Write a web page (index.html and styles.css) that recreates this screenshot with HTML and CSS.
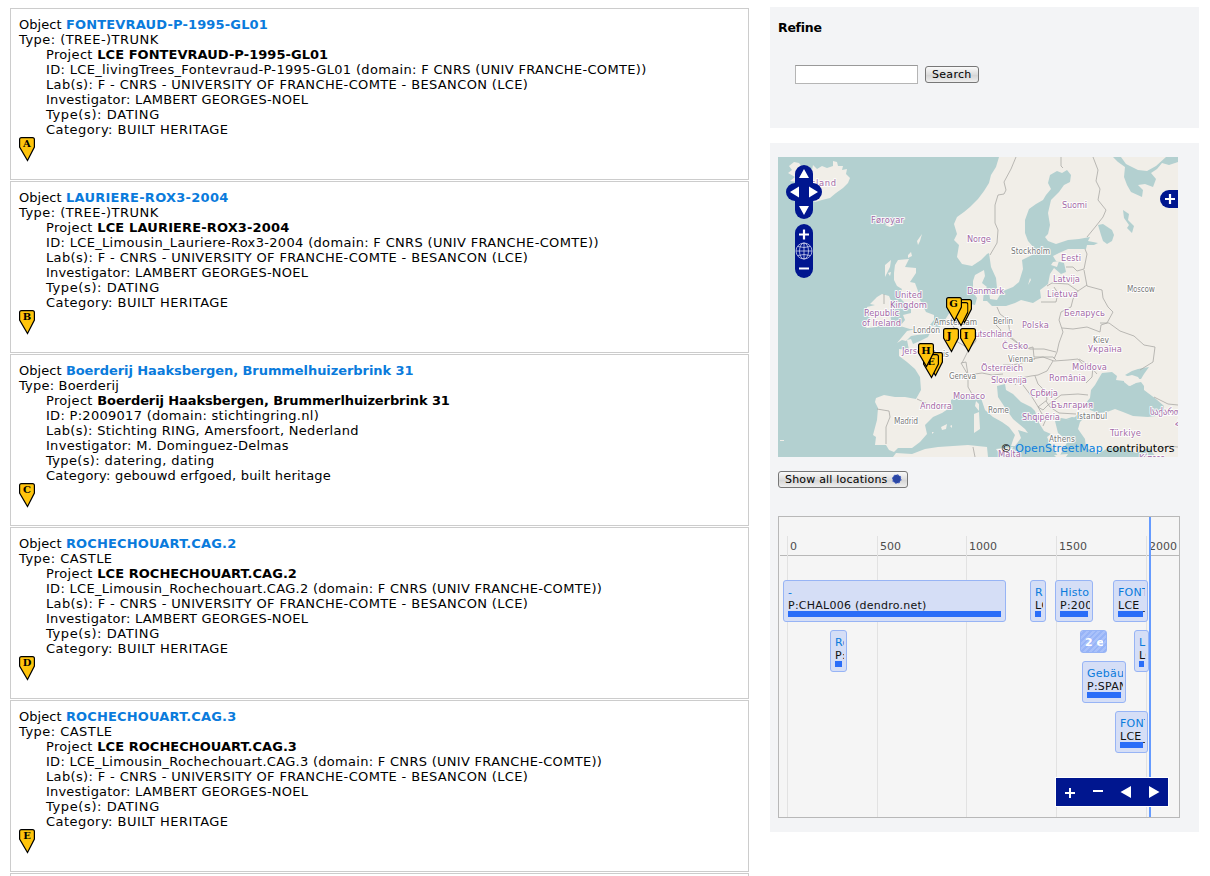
FILE: index.html
```html
<!DOCTYPE html>
<html lang="en">
<head>
<meta charset="utf-8">
<title>Search results</title>
<link rel="stylesheet" href="styles.css">
</head>
<body>
<svg class="defs" width="0" height="0">
  <symbol id="pin" viewBox="0 0 16 25">
    <path d="M2.5 .6H13.5Q15.4.6 15.4 2.5V10L8.5 23.6 .6 10V2.5Q.6.6 2.5.6Z" fill="#ffc40c" stroke="#000" stroke-width="1.2"/>
  </symbol>
</svg>
<div class="page">
  <main class="results">
    <article class="card">
      <div class="title">Object <a>FONTEVRAUD-P-1995-GL01</a></div>
      <div class="wide">Type: (TREE-)TRUNK</div>
      <div class="project">
        <div>Project <b>LCE FONTEVRAUD-P-1995-GL01</b></div>
        <div>ID: LCE_livingTrees_Fontevraud-P-1995-GL01 (domain: F CNRS (UNIV FRANCHE-COMTE))</div>
        <div class="lab">Lab(s): F - CNRS - UNIVERSITY OF FRANCHE-COMTE - BESANCON (LCE)</div>
        <div class="snug">Investigator: LAMBERT GEORGES-NOEL</div>
        <div class="wider">Type(s): DATING</div>
        <div class="wide">Category: BUILT HERITAGE</div>
      </div>
      <svg class="pin" viewBox="0 0 16 25"><use href="#pin"/><text x="8" y="10">A</text></svg>
    </article>
    <article class="card">
      <div class="title spaced">Object <a>LAURIERE-ROX3-2004</a></div>
      <div class="wide">Type: (TREE-)TRUNK</div>
      <div class="project">
        <div class="spaced">Project <b>LCE LAURIERE-ROX3-2004</b></div>
        <div>ID: LCE_Limousin_Lauriere-Rox3-2004 (domain: F CNRS (UNIV FRANCHE-COMTE))</div>
        <div class="lab">Lab(s): F - CNRS - UNIVERSITY OF FRANCHE-COMTE - BESANCON (LCE)</div>
        <div class="snug">Investigator: LAMBERT GEORGES-NOEL</div>
        <div class="wider">Type(s): DATING</div>
        <div class="wide">Category: BUILT HERITAGE</div>
      </div>
      <svg class="pin" viewBox="0 0 16 25"><use href="#pin"/><text x="8" y="10">B</text></svg>
    </article>
    <article class="card">
      <div class="title tight">Object <a>Boerderij Haaksbergen, Brummelhuizerbrink 31</a></div>
      <div class="snug">Type: Boerderij</div>
      <div class="project">
        <div class="tight">Project <b>Boerderij Haaksbergen, Brummerlhuizerbrink 31</b></div>
        <div class="medium">ID: P:2009017 (domain: stichtingring.nl)</div>
        <div class="medium">Lab(s): Stichting RING, Amersfoort, Nederland</div>
        <div class="medium">Investigator: M. Dominguez-Delmas</div>
        <div class="lab">Type(s): datering, dating</div>
        <div class="snug">Category: gebouwd erfgoed, built heritage</div>
      </div>
      <svg class="pin" viewBox="0 0 16 25"><use href="#pin"/><text x="8" y="10">C</text></svg>
    </article>
    <article class="card">
      <div class="title">Object <a>ROCHECHOUART.CAG.2</a></div>
      <div class="wide">Type: CASTLE</div>
      <div class="project">
        <div>Project <b>LCE ROCHECHOUART.CAG.2</b></div>
        <div class="medium">ID: LCE_Limousin_Rochechouart.CAG.2 (domain: F CNRS (UNIV FRANCHE-COMTE))</div>
        <div class="lab">Lab(s): F - CNRS - UNIVERSITY OF FRANCHE-COMTE - BESANCON (LCE)</div>
        <div class="snug">Investigator: LAMBERT GEORGES-NOEL</div>
        <div class="wider">Type(s): DATING</div>
        <div class="wide">Category: BUILT HERITAGE</div>
      </div>
      <svg class="pin" viewBox="0 0 16 25"><use href="#pin"/><text x="8" y="10">D</text></svg>
    </article>
    <article class="card">
      <div class="title">Object <a>ROCHECHOUART.CAG.3</a></div>
      <div class="wide">Type: CASTLE</div>
      <div class="project">
        <div>Project <b>LCE ROCHECHOUART.CAG.3</b></div>
        <div class="medium">ID: LCE_Limousin_Rochechouart.CAG.3 (domain: F CNRS (UNIV FRANCHE-COMTE))</div>
        <div class="lab">Lab(s): F - CNRS - UNIVERSITY OF FRANCHE-COMTE - BESANCON (LCE)</div>
        <div class="snug">Investigator: LAMBERT GEORGES-NOEL</div>
        <div class="wider">Type(s): DATING</div>
        <div class="wide">Category: BUILT HERITAGE</div>
      </div>
      <svg class="pin" viewBox="0 0 16 25"><use href="#pin"/><text x="8" y="10">E</text></svg>
    </article>
    <article class="card next"></article>
  </main>

  <aside class="side">
    <section class="panel refine">
      <h2>Refine</h2>
      <form class="search"><input type="text" class="field"><button type="button" class="btn">Search</button></form>
    </section>

    <section class="panel explore">
      <svg class="map" viewBox="0 0 400 300" width="400" height="300">
        <rect width="400" height="300" fill="#b3d0d0"/>
        <g fill="#f1eee8">
          <path d="M10 16L14 13 11 9 16 5 21 6 24 10 30 9 34 13 35 8 39 12 44 9 49 11 55 9 55 4 59 5 60 9 65 9 64 13 69 12 68 17 72 21 70 26 65 31 58 36 52 41 44 43 37 45 30 41 22 40 24 30 17 31 20 25 12 24 17 20Z"/>
          <path d="M107 68L112 65 117 68 112 70ZM139 84L144 77 142 84 140 88ZM130 98L133 95 134 99 130 101ZM107 108L113 103 112 110 107 120ZM110 116L113 115 112 119Z"/>
          <path d="M120 103L131 102 127 110 138 111 138 116 132 125 137 126 140 134 142 143 146 151 148 155 156 158 156 163 152 168 159 170 157 175 149 177 139 178 133 179 128 184 124 183 119 186 124 180 129 174 138 172 132 172 122 169 127 163 125 158 133 156 133 149 128 147 121 140 124 132 119 129 116 123 116 116 117 108Z"/>
          <path d="M104 137L111 139 114 146 112 154 113 163 107 167 98 170 89 171 85 168 92 161 89 157 89 150 97 148 92 147 99 140Z"/>
          <path d="M400 0H221L218 10 213 18 211 26 206 34 200 42 192 50 186 55 179 60 176 67 179 77 176 83 181 88 179 100 184 107 194 109 203 103 209 97 211 96 213 110 218 121 219 131 225 134 235 130 241 125 245 112 244 103 254 98 257 92 250 84 247 76 247 63 251 52 258 47 265 43 268 38 273 32 270 26 272 18 279 14 284 16 289 13 293 18 292 25 286 28 281 35 273 43 270 56 272 68 270 77 267 80 270 84 278 87 290 83 301 82 312 80 310 84 320 86 316 88 309 88 308 92 298 92 290 92 281 96 275 99 278 104 286 106 288 115 283 117 276 111 272 117 270 127 262 133 263 141 255 146 243 143 237 146 228 149 214 149 209 144 205 144 206 133 209 130 204 126 207 119 206 113 197 118 195 124 195 135 199 141 197 148 184 145 177 149 172 155 165 166 159 173 152 176 150 180 142 184 135 187 133 182 129 183 131 193 121 192 121 199 129 205 137 212 142 220 143 233 138 242 127 240 117 240 106 238 98 241 97 245 100 251 99 263 95 278 98 280 97 288 108 288 111 293 116 295 120 291 134 291 142 285 149 277 147 268 155 260 164 256 173 250 173 243 182 239 190 240 197 239 203 241 207 253 215 260 224 265 231 270 237 278 235 283 233 289 237 289 243 281 240 273 250 276 247 272 235 262 228 252 220 240 219 229 227 227 228 233 235 237 243 245 253 250 257 254 261 266 266 274 273 277 269 280 275 292 281 300 286 291 290 284 280 276 277 264 283 261 294 263 299 258 310 257 302 265 300 272 307 282 308 291 320 297 330 291 344 290 358 296 371 291 378 300H400Z"/>
          <path d="M211 135L220 131 223 136 219 143 212 142Z"/>
          <path d="M115 300L118 296 134 297 147 292 160 290 175 289 190 288 209 290 210 300Z"/>
          <path d="M218 292L235 290 232 299 221 296ZM198 244L201 247 201 254 197 249ZM196 257L201 255 202 272 196 276ZM163 270L169 267 168 272 164 273ZM172 269L174 268 174 271ZM154 275L156 275 154 277ZM2 283H6V284H2ZM276 298L290 297 288 300H278ZM245 90L249 92 247 97ZM252 121L250 128 253 123ZM275 105L281 104 279 110 273 108Z"/>
        </g>
        <g fill="#b3d0d0">
          <path d="M335 0L340 5 347 10 346 20 349 28 353 35 364 40 365 33 360 28 367 27 375 30 378 22 373 16 379 12 384 6 391 8 400 5V0H388L378 9 369 14 360 13 348 7 343 0Z"/>
          <path d="M320 68L325 67 334 73 336 78 334 84 329 87 325 84 323 78Z"/>
          <path d="M345 53L351 57 350 63 356 69 354 76 349 71 351 68 346 61Z"/>
          <path d="M321 221L324 216 334 215 339 219 338 223 346 224 352 229 358 226 363 225 366 229 366 233 378 242 386 249 386 255 378 259 370 260 355 259 345 255 337 252 329 255 320 256 312 253 308 246 312 241 313 233 317 228Z"/>
          <path d="M347 218L354 214 360 212 371 210 366 217 363 222 356 222Z"/>
          <path d="M288 262L294 260 301 261 296 264Z"/>
        </g>
        <path d="M346 225L346 220 354 218 360 220 362 223 357 226 351 229Z" fill="#f1eee8"/>
        <g fill="none" stroke="#aaa8a5" stroke-width=".8">
          <path d="M238 0L233 12 226 25 228 33 226 37 220 38 217 48 217 66 220 73 219 86 212 98M283 0V9L285 11M315 0L320 13 318 24 322 32 320 43 328 53 325 60 318 69 309 80M307 92L309 97 306 112 299 114 295 110 288 110M306 113L309 129 324 133 325 141 330 150M269 129L274 126 290 127 300 134 309 128M276 130L280 136 278 145 263 145M300 134L295 142 293 150 283 155 281 163 285 175 281 186 279 195 276 202M284 171L295 172 309 170 322 175 323 168 329 166 335 155 330 150M322 166L331 166 342 174 356 179 366 188 377 190 375 205 362 213M218 168L223 173 219 179 231 180 242 188 252 192 266 192 278 195M219 150L222 157 230 163 232 177M233 180L247 192 255 190 256 200 275 200 278 203M225 208L235 208 248 205 257 202M254 202L265 200 276 204 290 203 300 202 308 211 315 210 314 220 308 226M275 204L269 214 260 218 253 219 243 221 237 228M257 219L260 227 268 235 269 243 260 250 265 253 270 248 283 238 300 237 310 238M268 244L272 250 281 256 298 257M245 228L254 240 259 248 264 257 269 260 265 269M301 202L311 208 319 217M225 217L214 218 204 216 190 218 188 205 183 206 190 218 190 230 194 237M184 206L191 192 198 184 196 173M139 242L152 248 173 250M99 252L111 254 112 260 108 270 108 287M106 137L106 147M195 290L197 300M376 240L390 247 400 248M379 293L390 289 400 290M166 175L178 184 190 191M172 165L178 173"/>
        </g>
        <g class="country">
          <text x="30" y="29" textLength="28">Ísland</text>
          <text x="93" y="66" textLength="33">Føroyar</text>
          <text x="189" y="85" textLength="24">Norge</text>
          <text x="284" y="51" textLength="25">Suomi</text>
          <text x="189" y="137" textLength="37">Danmark</text>
          <text x="283" y="104" textLength="20">Eesti</text>
          <text x="275" y="125" textLength="27">Latvija</text>
          <text x="269" y="140" textLength="31">Lietuva</text>
          <text x="117" y="141" textLength="27">United</text>
          <text x="112" y="151" textLength="37">Kingdom</text>
          <text x="86" y="159" textLength="35">Republic</text>
          <text x="84" y="169" textLength="39">of Ireland</text>
          <text x="286" y="159" textLength="41">Беларусь</text>
          <text x="244" y="171" textLength="27">Polska</text>
          <text x="186" y="180" textLength="48">Deutschland</text>
          <text x="224" y="192" textLength="26">Česko</text>
          <text x="310" y="195" textLength="34">Україна</text>
          <text x="124" y="197" textLength="25">Jersey</text>
          <text x="203" y="214" textLength="42">Österreich</text>
          <text x="294" y="213" textLength="35">Moldova</text>
          <text x="213" y="226" textLength="36">Slovenija</text>
          <text x="271" y="224" textLength="37">România</text>
          <text x="252" y="239" textLength="28">Србија</text>
          <text x="175" y="242" textLength="32">Monaco</text>
          <text x="142" y="252" textLength="32">Andorra</text>
          <text x="273" y="251" textLength="42">България</text>
          <text x="244" y="263" textLength="38">Shqipëria</text>
          <text x="332" y="279" textLength="31">Türkiye</text>
          <text x="372" y="258">საქართველო</text>
          <text x="397" y="270">Հ</text>
          <text x="220" y="300" textLength="23">Malta</text>
          <text x="361" y="304" textLength="26">Κύπρος</text>
        </g>
        <g class="city">
          <text x="233" y="97" textLength="39">Stockholm</text>
          <text x="349" y="135" textLength="28">Moscow</text>
          <text x="156" y="168" textLength="43">Amsterdam</text>
          <text x="135" y="176" textLength="27">London</text>
          <text x="215" y="167" textLength="20">Berlin</text>
          <text x="153" y="200" textLength="18">Paris</text>
          <text x="315" y="186" textLength="16">Kiev</text>
          <text x="230" y="205" textLength="25">Vienna</text>
          <text x="171" y="222" textLength="27">Geneva</text>
          <text x="116" y="267" textLength="24">Madrid</text>
          <text x="210" y="256" textLength="21">Rome</text>
          <text x="299" y="262" textLength="30">Istanbul</text>
          <text x="271" y="285" textLength="26">Athens</text>
        </g>
        <g class="pins">
          <use href="#pin" x="178" y="142" width="16" height="25"/>
          <use href="#pin" x="174.500" y="145" width="16" height="25"/>
          <use href="#pin" x="168" y="140" width="16" height="25"/><text x="175.500" y="150">G</text>
          <use href="#pin" x="165" y="171" width="16" height="25"/><text x="171" y="182">J</text>
          <use href="#pin" x="182" y="171" width="16" height="25"/><text x="188" y="182">I</text>
          <use href="#pin" x="149" y="195" width="16" height="25"/>
          <use href="#pin" x="145" y="197" width="16" height="25"/><text x="153" y="208">E</text>
          <use href="#pin" x="140" y="186" width="16" height="25"/><text x="148" y="197">H</text>
        </g>
        <g fill="#00168f">
          <rect x="17" y="8" width="18" height="54" rx="9"/>
          <rect x="8" y="26" width="36" height="18" rx="9"/>
          <rect x="17" y="67" width="18" height="54" rx="9"/>
          <path d="M400 33H391a9 9 0 0 0 0 18H400Z"/>
        </g>
        <path d="M26 12L31 21H21ZM26 58L31 49H21ZM12 35L21 29.500V40.500ZM40 35L31 29.500V40.500Z" fill="#fff"/>
        <path d="M21 77.500H31M26 72.500V82.500M21 111.500H31M387 42H397M392 37V47" stroke="#fff" stroke-width="2.200"/>
        <g fill="none" stroke="#cdd2ee" stroke-width=".8"><circle cx="26" cy="94" r="8"/><ellipse cx="26" cy="94" rx="4.500" ry="8"/><path d="M26 86V102M18 94H34M20 89.500Q26 91.500 32 89.500M20 98.500Q26 96.500 32 98.500"/></g>
        <text class="credit" x="222.500" y="295" textLength="174">© <tspan fill="#0a7fdf">OpenStreetMap</tspan> contributors</text>
      </svg>

      <button type="button" class="btn locations">Show all locations
        <svg width="12" height="12" viewBox="0 0 12 12"><circle cx="6" cy="5" r="4.400" fill="#2a46a4"/><circle cx="6" cy="5" r="4.400" fill="none" stroke="#4a66c4" stroke-width="1.200" stroke-dasharray="1.700 1.700"/></svg>
      </button>

      <div class="timeline">
        <div class="axis"></div>
        <div class="tick" style="left:8px"><span>0</span></div>
        <div class="tick" style="left:98px"><span>500</span></div>
        <div class="tick" style="left:187px"><span>1000</span></div>
        <div class="tick" style="left:277px"><span>1500</span></div>
        <div class="tick" style="left:367px"><span>2000</span></div>
        <div class="event" style="left:4px;top:63px;width:223px"><a>-</a><p>P:CHAL006 (dendro.net)</p><i></i></div>
        <div class="event" style="left:251px;top:63px;width:16px"><a>RO</a><p>LCE</p><i></i></div>
        <div class="event" style="left:276px;top:63px;width:38px"><a>Historisch</a><p>P:2009</p><i></i></div>
        <div class="event" style="left:334px;top:63px;width:35px"><a>FONTEV</a><p>LCE_liv</p><i></i></div>
        <div class="event" style="left:51px;top:113px;width:17px"><a>Ro</a><p>P:2</p><i></i></div>
        <div class="cluster"><span>2 events</span></div>
        <div class="event" style="left:355px;top:113px;width:15px"><a>LA</a><p>LCE</p><i></i></div>
        <div class="event" style="left:303px;top:144px;width:44px"><a>Gebäude</a><p>P:SPAN</p><i></i></div>
        <div class="event" style="left:336px;top:194px;width:33px"><a>FONTE</a><p>LCE_l</p><i></i></div>
        <div class="now"></div>
        <svg class="nav" width="114" height="30" viewBox="0 0 114 30"><rect width="114" height="30" fill="#fff"/><rect x="1" y="1" width="112" height="28" fill="#00168f"/><path d="M10 16H20M15 11V21M38 14H48" stroke="#fff" stroke-width="2"/><path d="M65.500 15L76 9V21ZM104.500 15L94 9V21Z" fill="#fff"/></svg>
      </div>
    </section>
  </aside>
</div>
</body>
</html>
```
FILE: styles.css
```css
* { box-sizing: border-box; }
body { margin: 0; height: 876px; overflow: hidden; background: #fff; color: #000; font: 13px/15px Verdana, "DejaVu Sans", sans-serif; }
a { color: #0a7bdc; }
.defs { position: absolute; }
.page { display: flex; align-items: flex-start; gap: 21px; padding: 7px 11px 0 10px; }
.results { width: 739px; display: flex; flex-direction: column; gap: 1px; padding-top: 1px; }
.card { height: 172px; flex: none; border: 1px solid #ccc; padding: 7px 8px; white-space: nowrap; letter-spacing: .33px; }
.card.next { height: 3px; padding: 0; border-bottom: 0; }
.title { padding-top: 1px; letter-spacing: .06px; }
.title a { font-weight: bold; letter-spacing: .16px; }
.spaced a { letter-spacing: .27px; }
.tight a { letter-spacing: -.07px; }
.project { padding-left: 27px; }
.project b { letter-spacing: .04px; }
.project .spaced b { letter-spacing: .14px; }
.project .tight b { letter-spacing: -.1px; }
.snug { letter-spacing: .2px; }
.medium { letter-spacing: .29px; }
.lab { letter-spacing: .36px; }
.wide { letter-spacing: .46px; }
.wider { letter-spacing: .62px; }
.pin { display: block; width: 16px; height: 25px; overflow: visible; letter-spacing: 0; }
.pin text, .pins text { font: bold 10px "DejaVu Serif", serif; text-anchor: middle; }
.side { width: 429px; display: flex; flex-direction: column; gap: 15px; }
.panel { background: #f3f4f6; padding-left: 8px; }
.refine { height: 121px; padding-top: 13px; }
.refine h2 { margin: 0; font-size: 12.5px; line-height: 15px; letter-spacing: -.25px; }
.search { display: flex; align-items: center; gap: 7px; margin: 30px 0 0 17px; }
.field { width: 123px; height: 19px; padding: 0; border: 1px solid #b5b5b5; border-top-color: #999; background: #fff; }
.btn { height: 17px; padding: 1px 6px 0; border: 1px solid #777; border-radius: 3px; background: linear-gradient(#fafafa, #ddd 50%, #d5d5d5 55%, #eee); color: #000; font: 11px/14px Verdana, "DejaVu Sans", sans-serif; letter-spacing: .3px; }
.explore { height: 689px; padding-top: 14px; }
.map { display: block; overflow: hidden; }
.country, .city { paint-order: stroke; stroke: #fff; stroke-opacity: .85; stroke-width: 2px; stroke-linejoin: round; font-family: "DejaVu Sans Condensed", "DejaVu Sans", sans-serif; }
.country { font-size: 9.3px; fill: #a46ba8; }
.city { font-size: 8.4px; fill: #777; }
.credit { font-size: 11px; fill: #000; }
.locations { display: flex; align-items: center; gap: 3px; width: 130px; margin-top: 14px; padding: 1px 5px 0 6px; white-space: nowrap; letter-spacing: .2px; }
.timeline { position: relative; width: 402px; height: 302px; margin-top: 28px; border: 1px solid #b8b8b8; background: #f5f5f5; overflow: hidden; font-size: 11px; line-height: 13px; letter-spacing: .25px; }
.axis { position: absolute; top: 38px; left: 1px; right: 0; height: 1px; background: #b8b8b8; }
.tick { position: absolute; top: 19px; bottom: 0; border-left: 1px solid #e2e2e2; color: #4d4d4d; letter-spacing: 0; }
.tick span { display: block; padding: 4px 0 0 2px; }
.event { position: absolute; height: 42px; padding: 5px 4px; border: 1px solid #97b4f5; border-radius: 3px; background: #d5def6; white-space: nowrap; }
.event a, .event p { display: block; margin: 0 -2px 0 0; height: 13px; overflow: hidden; }
.event a { color: #0a7bdc; }
.event p { color: #111; }
.event i { display: block; height: 6px; margin-top: -1px; position: relative; background: #2a6df8; }
.cluster { position: absolute; left: 301px; top: 113px; width: 27px; height: 23px; padding: 5px 3px 0 4px; border: 1px solid #97b4f5; border-radius: 3px; background: repeating-linear-gradient(135deg, #a9c1fa 0 2px, #97b4f7 2px 4px); color: #fff; font-weight: bold; letter-spacing: 0; }
.cluster span { display: block; overflow: hidden; white-space: nowrap; }
.now { position: absolute; left: 370px; top: 0; bottom: 0; width: 2px; background: #659bff; }
.nav { position: absolute; left: 276px; top: 260px; }
```
